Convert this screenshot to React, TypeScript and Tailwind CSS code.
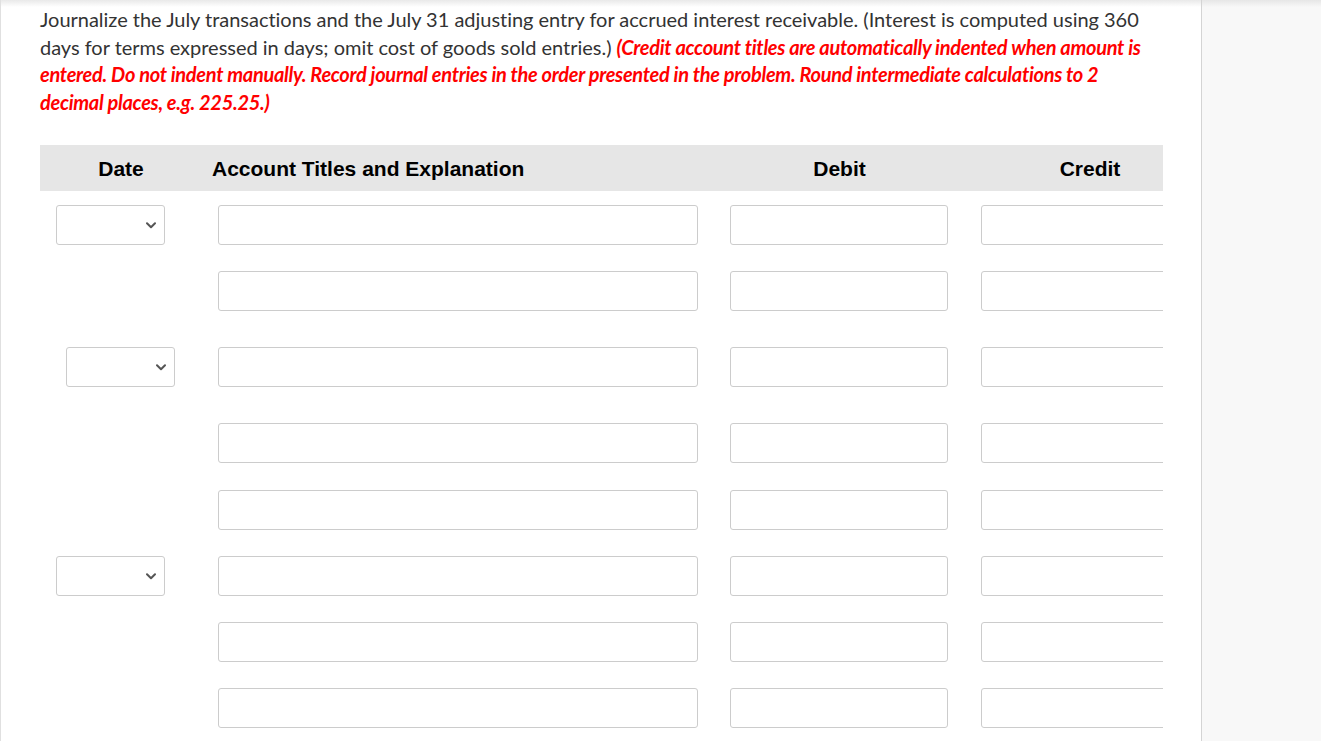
type Row = {
  hasDate: boolean;
  dateIndent?: boolean;
  gapTop: string;
};

const rows: Row[] = [
  { hasDate: true, gapTop: "mt-[14px]" },
  { hasDate: false, gapTop: "mt-[26px]" },
  { hasDate: true, dateIndent: true, gapTop: "mt-[36px]" },
  { hasDate: false, gapTop: "mt-[36px]" },
  { hasDate: false, gapTop: "mt-[27px]" },
  { hasDate: true, gapTop: "mt-[26px]" },
  { hasDate: false, gapTop: "mt-[26px]" },
  { hasDate: false, gapTop: "mt-[26px]" },
];

function Box({ className }: { className: string }) {
  return (
    <div
      className={`h-10 rounded-[3px] border border-[#cccccc] bg-white ${className}`}
    />
  );
}

function DateSelect({ indent }: { indent?: boolean }) {
  return (
    <div
      className={`flex h-10 w-[109px] items-center justify-end rounded-[3px] border border-[#cccccc] bg-white pr-[8px] ${
        indent ? "ml-[10px]" : ""
      }`}
    >
      <svg width="10" height="7" viewBox="0 0 10 7" fill="none">
        <path
          d="M1 1.2 L5 5.2 L9 1.2"
          stroke="#555555"
          strokeWidth="2"
          strokeLinecap="round"
          strokeLinejoin="round"
        />
      </svg>
    </div>
  );
}

export default function App() {
  return (
    <div className="flex h-[741px] w-full overflow-hidden bg-white font-['Lato',sans-serif]">
      <main className="relative w-[1201px] shrink-0 border-l border-[#e0e0e0] pl-[39px]">
        <div className="pointer-events-none absolute inset-x-0 top-0 h-[7px] bg-gradient-to-b from-[#e9e9e9] to-white/0" />
        <p className="w-[1123px] pt-[6px] text-[20px] leading-[27.6px] tracking-[-0.02px] text-[#333333]">
          Journalize the July transactions and the July 31 adjusting entry for
          accrued interest receivable. (Interest is computed using 360 days for
          terms expressed in days; omit cost of goods sold entries.){" "}
          <span className="font-bold italic tracking-[-0.3px] text-[#ff0000]">
            (Credit account titles are automatically indented when amount is
            entered. Do not indent manually. Record journal entries in the order
            presented in the problem. Round intermediate calculations to 2
            decimal places, e.g. 225.25.)
          </span>
        </p>

        <div className="mt-[29px] w-[1123px] overflow-hidden">
          <div className="grid h-[46px] w-[1175px] grid-cols-[162px_512px_251px_250px] items-center bg-[#e6e6e6] font-['Liberation_Sans',Arial,sans-serif] text-[21px] font-bold text-black">
            <div className="text-center">Date</div>
            <div className="pl-[10px]">Account Titles and Explanation</div>
            <div className="text-center">Debit</div>
            <div className="text-center">Credit</div>
          </div>

          {rows.map((row, i) => (
            <div
              key={i}
              className={`grid w-[1175px] grid-cols-[162px_512px_251px_250px] ${row.gapTop}`}
            >
              <div className="pl-[16px]">
                {row.hasDate && <DateSelect indent={row.dateIndent} />}
              </div>
              <div className="pl-[16px]">
                <Box className="w-[480px]" />
              </div>
              <div className="pl-[16px]">
                <Box className="w-[218px]" />
              </div>
              <div className="pl-[16px]">
                <Box className="w-[218px]" />
              </div>
            </div>
          ))}
        </div>
      </main>
      <aside className="relative flex-1 border-l border-[#d4d4d4] bg-[#f8f8f8]">
        <div className="pointer-events-none absolute inset-x-0 top-0 h-[7px] bg-gradient-to-b from-[#e6e6e6] to-white/0" />
      </aside>
    </div>
  );
}
